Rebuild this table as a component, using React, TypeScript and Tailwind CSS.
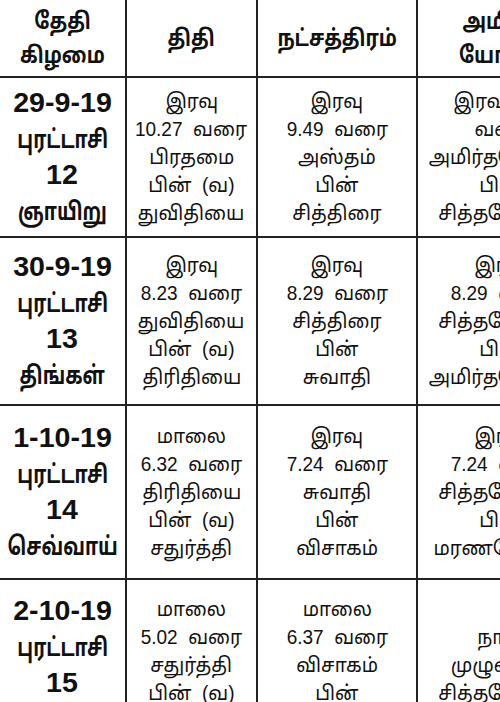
const rows = [
  {
    date: ['29-9-19', 'புரட்டாசி', '12', 'ஞாயிறு'],
    thithi: ['இரவு', '10.27  வரை', 'பிரதமை', 'பின்  (வ)', 'துவிதியை'],
    star: ['இரவு', '9.49  வரை', 'அஸ்தம்', 'பின்', 'சித்திரை'],
    yogam: ['இரவு 9.49', 'வரை', 'அமிர்தயோகம்', 'பின்', 'சித்தயோகம்'],
    h: 'h-[158px]',
  },
  {
    date: ['30-9-19', 'புரட்டாசி', '13', 'திங்கள்'],
    thithi: ['இரவு', '8.23  வரை', 'துவிதியை', 'பின்  (வ)', 'திரிதியை'],
    star: ['இரவு', '8.29  வரை', 'சித்திரை', 'பின்', 'சுவாதி'],
    yogam: ['இரவு', '8.29  வரை', 'சித்தயோகம்', 'பின்', 'அமிர்தயோகம்'],
    h: 'h-[166px]',
  },
  {
    date: ['1-10-19', 'புரட்டாசி', '14', 'செவ்வாய்'],
    thithi: ['மாலை', '6.32  வரை', 'திரிதியை', 'பின்  (வ)', 'சதுர்த்தி'],
    star: ['இரவு', '7.24  வரை', 'சுவாதி', 'பின்', 'விசாகம்'],
    yogam: ['இரவு', '7.24  வரை', 'சித்தயோகம்', 'பின்', 'மரணயோகம்'],
    h: 'h-[172px]',
  },
  {
    date: ['2-10-19', 'புரட்டாசி', '15', 'புதன்'],
    thithi: ['மாலை', '5.02  வரை', 'சதுர்த்தி', 'பின்  (வ)', 'பஞ்சமி'],
    star: ['மாலை', '6.37  வரை', 'விசாகம்', 'பின்', 'அனுஷம்'],
    yogam: ['நாள்', 'முழுவதும்', 'சித்தயோகம்'],
    h: 'h-[170px]',
  },
];

// the print face is narrower than Noto Sans Tamil, so squeeze the Tamil lines
function DateCell({ lines }: { lines: string[] }) {
  return (
    <div className="flex h-full flex-col items-center justify-center bg-white text-center font-bold">
      {lines.map((l, i) =>
        /\d/.test(l) ? (
          <div key={i} className="whitespace-nowrap text-[27px] leading-[36px] scale-x-[1.06]">
            {l}
          </div>
        ) : (
          <div key={i} className="whitespace-nowrap text-[25px] leading-[36px] scale-x-[0.76]">
            {l}
          </div>
        ),
      )}
    </div>
  );
}

function Lines({ lines }: { lines: string[] }) {
  return (
    <div className="flex h-full flex-col items-center justify-center bg-white text-center">
      {lines.map((l, i) => (
        <div key={i} className="whitespace-pre text-[20px] leading-[28px] scale-x-[0.95]">
          {l}
        </div>
      ))}
    </div>
  );
}

function Head({ lines }: { lines: string[] }) {
  return (
    <div className="flex h-[76px] flex-col items-center justify-center bg-white text-[23px] font-bold leading-[34px]">
      {lines.map((l, i) => (
        <div key={i} className="whitespace-nowrap scale-x-[0.84]">
          {l}
        </div>
      ))}
    </div>
  );
}

export default function App() {
  return (
    <div
      className="h-[702px] w-[500px] overflow-hidden bg-white text-[#111]"
      style={{ fontFamily: '"Liberation Sans", "Noto Sans Tamil", "Noto Sans", sans-serif' }}
    >
      <div className="grid w-[584px] grid-cols-[125px_129px_158px_166px] gap-[2px] bg-[#222]">
        <Head lines={['தேதி', 'கிழமை']} />
        <Head lines={['திதி']} />
        <Head lines={['நட்சத்திரம்']} />
        <Head lines={['அமிர்த', 'யோகம்']} />
        {rows.map((r, i) => (
          <div key={i} className="contents">
            <div className={r.h}>
              <DateCell lines={r.date} />
            </div>
            <div className={r.h}>
              <Lines lines={r.thithi} />
            </div>
            <div className={r.h}>
              <Lines lines={r.star} />
            </div>
            <div className={r.h}>
              <Lines lines={r.yogam} />
            </div>
          </div>
        ))}
      </div>
    </div>
  );
}
